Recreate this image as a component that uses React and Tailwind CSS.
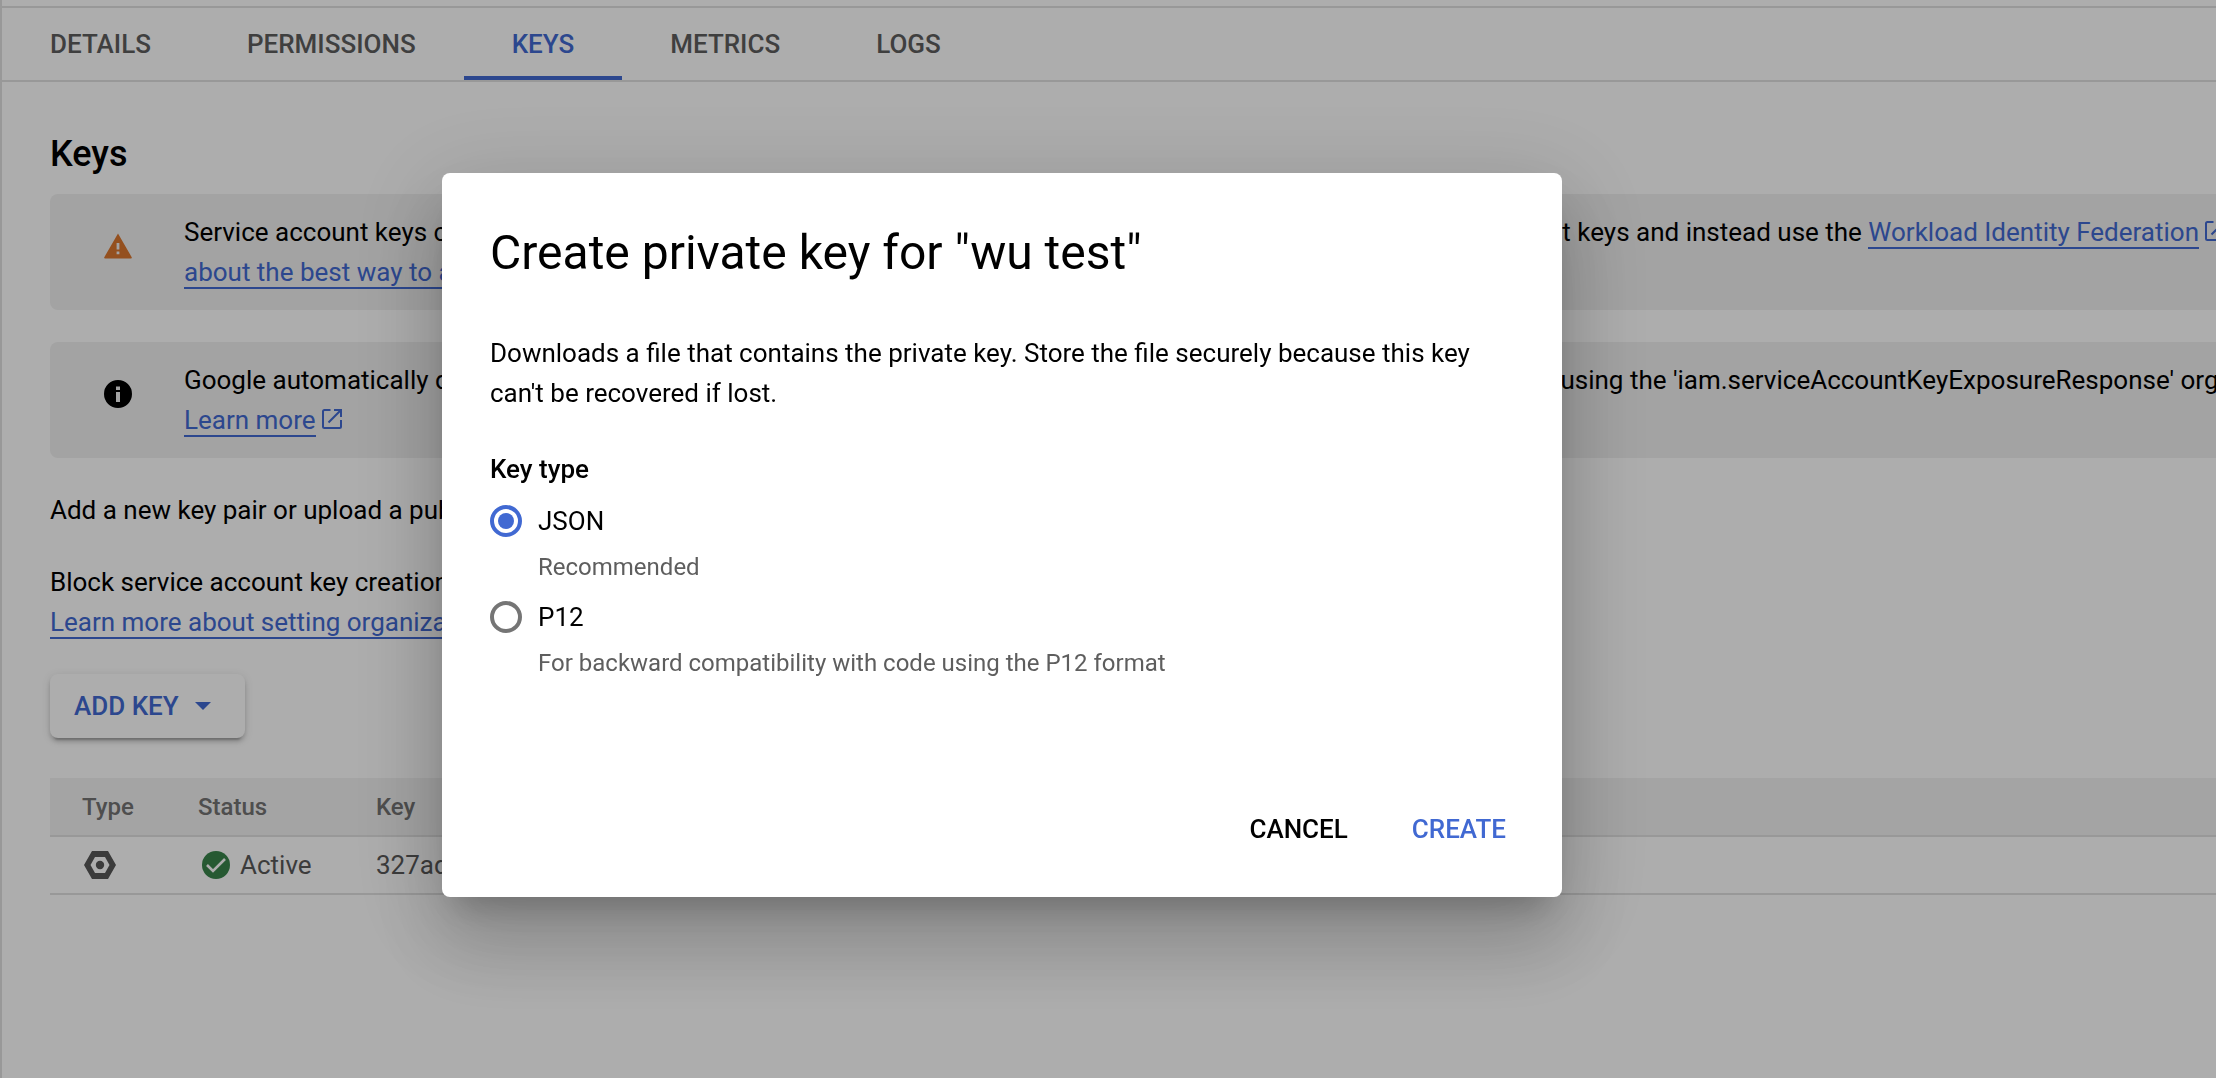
import React, { useState } from "react";

const TABS = ["DETAILS", "PERMISSIONS", "KEYS", "METRICS", "LOGS"];

const KEY_TYPES = [
  { id: "json", label: "JSON", hint: "Recommended" },
  { id: "p12", label: "P12", hint: "For backward compatibility with code using the P12 format" },
];

function WarningIcon() {
  return (
    <svg viewBox="0 0 28 26" className="h-[26px] w-7" aria-hidden="true">
      <path
        fillRule="evenodd"
        d="M14 .5 27.7 24.2q.5 1.3-.8 1.3H1.1Q-.2 25.500 .3 24.200ZM12.600 10v6.500h2.800V10ZM12.600 18.500v2.800h2.800v-2.800Z"
        fill="#da762f"
      />
    </svg>
  );
}

function InfoIcon() {
  return (
    <svg viewBox="0 0 28 28" className="size-7" aria-hidden="true">
      <path
        fillRule="evenodd"
        d="M14 0a14 14 0 1 0 0 28 14 14 0 0 0 0-28ZM12 6.500h4V10h-4ZM12 12h4v10h-4Z"
        fill="#000"
      />
    </svg>
  );
}

function ExternalIcon() {
  return (
    <svg viewBox="0 0 20 20" className="inline-block size-5 align-baseline" aria-hidden="true">
      <path
        d="M8.500 1H2.500Q1 1 1 2.500v15Q1 19 2.500 19h15q1.500 0 1.500-1.500V11M12 1h7v7M18.700 1.300 6.500 13.500"
        fill="none"
        stroke="#4169d2"
        strokeWidth="2"
      />
    </svg>
  );
}

function HexagonIcon() {
  return (
    <svg viewBox="0 0 32 28" className="h-7 w-8" aria-hidden="true">
      <path
        fillRule="evenodd"
        d="M8 0h16l8 14-8 14H8L0 14ZM11 6 6.500 14 11 22h10l4.500-8L21 6Z"
        fill="#575757"
      />
      <circle cx="16" cy="14" r="4.200" fill="#575757" />
    </svg>
  );
}

function CheckIcon() {
  return (
    <svg viewBox="0 0 28 28" className="size-7" aria-hidden="true">
      <circle cx="14" cy="14" r="14" fill="#38844b" />
      <path d="m5 14 6 6L23 8" fill="none" stroke="#fff" strokeWidth="2.600" />
    </svg>
  );
}

function TextLink({ children }) {
  return (
    <a href="#" className="border-b-2 border-[#4169d2] text-[#4169d2]">
      {children}
    </a>
  );
}

function Notice({ icon, children }) {
  return (
    <div className="flex items-start overflow-hidden rounded-l-lg bg-[#f0f0f0] py-[18px] pl-0.5">
      <div className="flex h-[68px] w-[132px] shrink-0 items-center justify-center">{icon}</div>
      <p className="whitespace-nowrap">{children}</p>
    </div>
  );
}

function KeysPage() {
  return (
    <div className="min-h-screen overflow-hidden border-l-2 border-[#e1e1e1] bg-white pt-1.5">
      <nav className="flex border-y-2 border-[#e1e1e1]">
        {TABS.map((tab) => (
          <a
            key={tab}
            href="#"
            aria-current={tab === "KEYS" ? "page" : undefined}
            className={
              tab === "KEYS"
                ? "flex h-[72px] items-center border-b-4 border-[#4169d2] px-12 pt-1 font-medium text-[#4169d2]"
                : "flex h-[72px] items-center px-12 font-medium text-[#5e5e5e]"
            }
          >
            {tab}
          </a>
        ))}
      </nav>

      <main className="pt-12 pl-12">
        <h1 className="text-4xl leading-12 font-medium">Keys</h1>

        <div className="mt-4 flex flex-col gap-8">
          <Notice icon={<WarningIcon />}>
            Service account keys could pose a security risk if compromised. We recommend you avoid downloading service
            account keys and instead use the <TextLink>Workload Identity Federation</TextLink> <ExternalIcon />. You can
            learn more
            <br />
            <TextLink>about the best way to authenticate service accounts on Google Cloud</TextLink>{" "}
            <ExternalIcon />.
          </Notice>
          <Notice icon={<InfoIcon />}>
            Google automatically disables service account keys detected in public repositories. You can customize this
            behavior by using the 'iam.serviceAccountKeyExposureResponse' organization policy.
            <br />
            <TextLink>Learn more</TextLink> <ExternalIcon />
          </Notice>
          <p>Add a new key pair or upload a public key certificate from an existing key pair.</p>
          <p>
            Block service account key creation using organization policies.
            <br />
            <TextLink>Learn more about setting organization policies for service accounts</TextLink>
          </p>
        </div>

        <button
          type="button"
          className="mt-8 flex h-16 items-center rounded-lg bg-white pr-[34px] pl-6 font-medium text-[#4169d2] shadow-[0_6px_2px_-4px_rgba(0,0,0,0.2),0_4px_4px_0_rgba(0,0,0,0.14),0_2px_10px_0_rgba(0,0,0,0.12)]"
        >
          ADD KEY
          <svg viewBox="0 0 16 8" className="ml-4 h-2 w-4" aria-hidden="true">
            <path d="M0 0h16L8 8Z" fill="#4169d2" />
          </svg>
        </button>

        <table className="mt-10 w-full table-fixed border-collapse text-left">
          <colgroup>
            <col className="w-[148px]" />
            <col className="w-[178px]" />
            <col />
          </colgroup>
          <thead>
            <tr className="h-[58px] border-b-2 border-[#e1e1e1] bg-[#f2f2f2] text-2xl text-[#737373]">
              <th className="pl-8 font-medium">Type</th>
              <th className="font-medium">Status</th>
              <th className="font-medium">Key</th>
            </tr>
          </thead>
          <tbody>
            <tr className="h-[58px] border-b-2 border-[#e1e1e1] text-[#595959]">
              <td className="pl-[34px]">
                <HexagonIcon />
              </td>
              <td>
                <span className="flex items-center gap-2.5 pl-1">
                  <CheckIcon />
                  Active
                </span>
              </td>
              <td>327ad</td>
            </tr>
          </tbody>
        </table>
      </main>
    </div>
  );
}

function CreateKeyDialog() {
  const [keyType, setKeyType] = useState("json");
  return (
    <div className="fixed inset-0 flex items-center justify-center bg-black/32 pr-[212px] pb-2">
      <div
        role="dialog"
        aria-labelledby="dialog-title"
        className="w-full max-w-[1120px] rounded-lg bg-white px-12 pt-12 pb-8 shadow-[0_22px_30px_-14px_rgba(0,0,0,0.2),0_48px_76px_6px_rgba(0,0,0,0.14),0_18px_92px_16px_rgba(0,0,0,0.12)]"
      >
        <h2 id="dialog-title" className="text-5xl leading-16">
          Create private key for "wu test"
        </h2>
        <p className="mt-12">
          Downloads a file that contains the private key. Store the file securely because this key can't be recovered
          if lost.
        </p>
        <fieldset className="mt-9">
          <legend className="font-medium">Key type</legend>
          <div className="flex flex-col gap-3.5 pt-3">
            {KEY_TYPES.map((type) => (
              <div key={type.id} className="grid grid-cols-[32px_1fr] items-center gap-x-4">
                <input
                  type="radio"
                  name="key-type"
                  id={type.id}
                  checked={keyType === type.id}
                  onChange={() => setKeyType(type.id)}
                  aria-describedby={type.id + "-hint"}
                  className="size-8 appearance-none rounded-full border-4 border-[#757575] bg-white checked:border-[#4169d2] checked:bg-[#4169d2] checked:bg-clip-content checked:p-1"
                />
                <label htmlFor={type.id}>{type.label}</label>
                <p id={type.id + "-hint"} className="col-start-2 pt-2.5 text-2xl text-[#5e5e5e]">
                  {type.hint}
                </p>
              </div>
            ))}
          </div>
        </fieldset>
        <div className="mt-[114px] flex justify-end gap-4">
          <button type="button" className="h-[72px] rounded-lg px-6 font-medium text-black">
            CANCEL
          </button>
          <button type="button" className="-mr-4 h-[72px] rounded-lg px-6 font-medium text-[#4169d2]">
            CREATE
          </button>
        </div>
      </div>
    </div>
  );
}

export default function App() {
  return (
    <div className="font-[Roboto,sans-serif] text-[26px] leading-10 text-black">
      <KeysPage />
      <CreateKeyDialog />
    </div>
  );
}
